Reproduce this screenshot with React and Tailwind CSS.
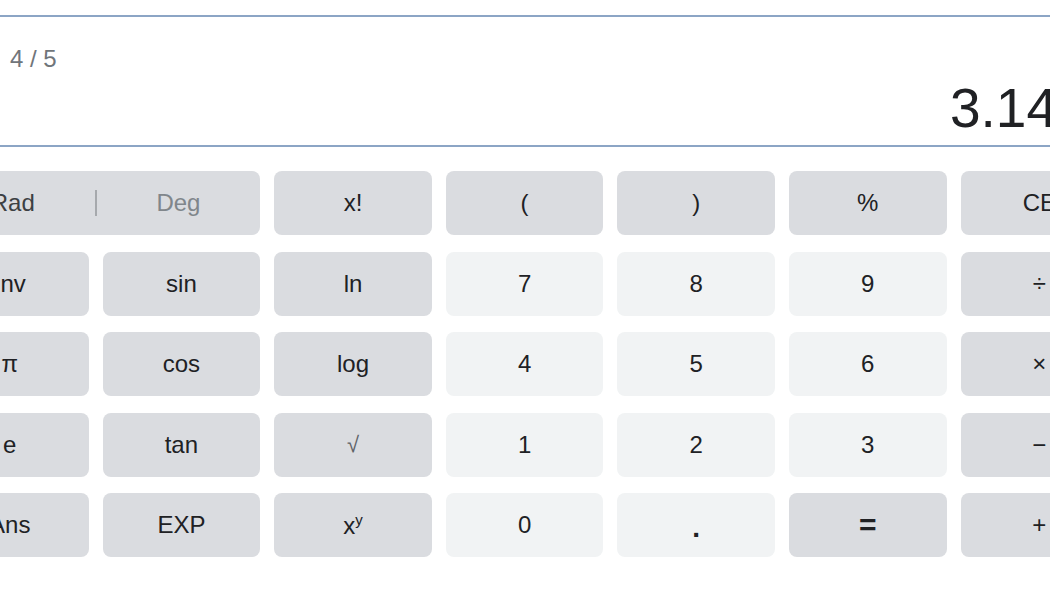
import React from "react";

const F = "bg-[#dadce0]";
const N = "bg-[#f1f3f4]";

function Btn({ children, tone, className = "" }) {
  return (
    <div
      className={`${tone} rounded-[8px] flex items-center justify-center text-[24px] leading-none text-[#202124] ${className}`}
    >
      {children}
    </div>
  );
}

export default function App() {
  return (
    <div
      className="w-[1050px] h-[600px] overflow-hidden bg-white"
      style={{ fontFamily: '"Liberation Sans", Arial, sans-serif' }}
    >
      <div className="ml-[-69px] w-[1186px]">
        <div className="mt-[15px] h-[132px] border-y-2 border-[#8ca5c5] pl-[79px] pr-[60px] pt-[30px] flex flex-col">
          <div className="text-[24px] leading-none text-[#70757a] h-[24px]">4 / 5</div>
          <div className="mt-[10px] text-[55px] leading-none text-[#202124] text-right h-[55px]">3.14</div>
        </div>

        <div className="mt-[24px] grid grid-cols-[repeat(7,157.6px)] grid-rows-[repeat(5,64px)] gap-x-[14px] gap-y-[16.5px]">
          <div className={`${F} col-span-2 rounded-[8px] flex items-center text-[24px] leading-none`}>
            <div className="flex-1 text-center text-[#3c4043]">Rad</div>
            <div className="w-[2px] h-[26px] bg-[#a6a9ad]" />
            <div className="flex-1 text-center text-[#80868b]">Deg</div>
          </div>
          <Btn tone={F}>x!</Btn>
          <Btn tone={F}>(</Btn>
          <Btn tone={F}>)</Btn>
          <Btn tone={F}>%</Btn>
          <Btn tone={F}>CE</Btn>

          <Btn tone={F}>Inv</Btn>
          <Btn tone={F}>sin</Btn>
          <Btn tone={F}>ln</Btn>
          <Btn tone={N}>7</Btn>
          <Btn tone={N}>8</Btn>
          <Btn tone={N}>9</Btn>
          <Btn tone={F}>÷</Btn>

          <Btn tone={F}>π</Btn>
          <Btn tone={F}>cos</Btn>
          <Btn tone={F}>log</Btn>
          <Btn tone={N}>4</Btn>
          <Btn tone={N}>5</Btn>
          <Btn tone={N}>6</Btn>
          <Btn tone={F}>×</Btn>

          <Btn tone={F}>e</Btn>
          <Btn tone={F}>tan</Btn>
          <Btn tone={F}><span className="text-[#5f6368] text-[22px]">√</span></Btn>
          <Btn tone={N}>1</Btn>
          <Btn tone={N}>2</Btn>
          <Btn tone={N}>3</Btn>
          <Btn tone={F}>−</Btn>

          <Btn tone={F}>Ans</Btn>
          <Btn tone={F}>EXP</Btn>
          <Btn tone={F}>
            <span>x<span className="text-[15px] align-[9px]">y</span></span>
          </Btn>
          <Btn tone={N}>0</Btn>
          <Btn tone={N}><span className="font-bold text-[28px] translate-y-[3px]">.</span></Btn>
          <Btn tone={F}><span className="font-bold text-[30px]">=</span></Btn>
          <Btn tone={F}>+</Btn>
        </div>
      </div>
    </div>
  );
}
